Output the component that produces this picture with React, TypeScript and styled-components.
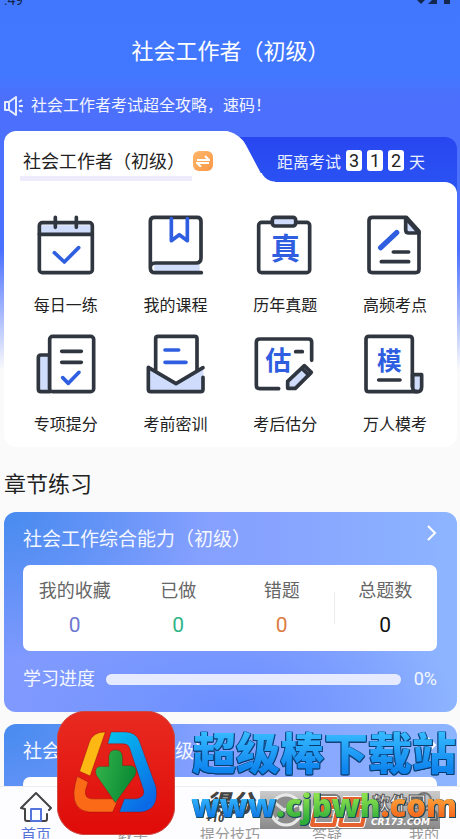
import React from "react";
import styled, { createGlobalStyle } from "styled-components";

const INK = "#30363f";
const BLUE = "#2f5fe0";
const PALE = "#cfdcfc";

const GlobalStyle = createGlobalStyle`
  *, *::before, *::after { box-sizing: border-box; }
  body {
    margin: 0;
    font-family: Roboto, "Noto Sans CJK SC", sans-serif;
    color: #222;
    background: #fafafb;
  }
  button { border: 0; padding: 0; background: none; font: inherit; color: inherit; cursor: pointer; }
  a { color: inherit; text-decoration: none; }
  h1, h2, h3, p, dl, dd, ul { margin: 0; padding: 0; font-weight: 400; }
  svg { display: block; flex: none; }
`;

const Screen = styled.div`
  position: relative;
  display: flex;
  flex-direction: column;
  height: 100vh;
  overflow: hidden;
`;

const Content = styled.main`
  flex: 1;
  min-height: 0;
  overflow: hidden;
  padding: 0 3px 0 4px;
  background: linear-gradient(#4177ff 0, #4278ff 75px, #4c70fc 95px, #4a70ff 250px, #fafafb 370px);
`;

const StatusBar = styled.div`
  display: flex;
  justify-content: space-between;
  align-items: flex-end;
  height: 5px;
  padding-right: 6px;
  font-size: 14px;
  line-height: 10px;
  color: #14284f;
  overflow: hidden;
`;

const PageTitle = styled.h1`
  padding: 31px 0 26px;
  font-size: 22px;
  line-height: 32px;
  text-align: center;
  color: #fff;
`;

const Notice = styled.p`
  display: flex;
  align-items: center;
  gap: 7px;
  margin-bottom: 13px;
  font-size: 16px;
  line-height: 24px;
  color: #f1f4ff;
  white-space: nowrap;
`;

const TabRow = styled.div`
  display: flex;
  align-items: flex-end;
`;

const SubjectTab = styled.div`
  position: relative;
  z-index: 1;
  display: flex;
  align-items: center;
  gap: 1px;
  width: 52%;
  height: 51px;
  padding: 0 0 0 16px;
  background: #fff;
  border-radius: 12px 16px 0 0;

  &::after {
    content: "";
    position: absolute;
    inset: 0 -12px 0 auto;
    z-index: -1;
    width: 40px;
    background: #fff;
    border-top-right-radius: 14px;
    transform: skewX(28deg);
  }

  &::before {
    content: "";
    position: absolute;
    right: -35px;
    bottom: 0;
    width: 14px;
    height: 9px;
    background: radial-gradient(circle at 100% -6px, #fff0 14px, #fff 15px);
  }
`;

const SubjectName = styled.h2`
  height: 42px;
  margin-top: 6px;
  padding: 0 7px 0 3px;
  border-bottom: 5px solid #eeebfc;
  font-size: 18px;
  line-height: 45px;
  white-space: nowrap;
`;

const SwapButton = styled.button`
  display: grid;
  place-items: center;
  width: 20px;
  height: 20px;
  margin-top: 8px;
  border-radius: 6px;
  background: linear-gradient(135deg, #ffb76a, #fb9647);
`;

const Countdown = styled.div`
  flex: 1;
  display: flex;
  align-items: center;
  justify-content: flex-end;
  gap: 5px;
  height: 59px;
  margin: 0 0 -14px -8px;
  padding: 0 32px 12px 0;
  border-radius: 0 12px 0 0;
  background: linear-gradient(#2846f0, #2b55f4);
  font-size: 16px;
  color: #eaf0ff;
  white-space: nowrap;
`;

const Digit = styled.span`
  width: 16px;
  height: 21px;
  border-radius: 3px;
  background: #fff;
  color: #222;
  font-size: 18px;
  line-height: 21px;
  text-align: center;
`;

const FeaturePanel = styled.nav`
  position: relative;
  z-index: 1;
  display: grid;
  grid-template-columns: repeat(4, 1fr);
  gap: 13px 0;
  padding: 30px 7px 10px;
  border-radius: 0 12px 12px 12px;
  background: #fff;
`;

const Feature = styled.a`
  display: flex;
  flex-direction: column;
  align-items: center;
  gap: 16px;
  font-size: 16px;
  line-height: 24px;
`;

const SectionTitle = styled.h2`
  margin: 22px 0 11px;
  font-size: 22px;
  line-height: 32px;
`;

const CourseCard = styled.section`
  margin-bottom: 12px;
  padding: 12px 20px 21px 19px;
  border-radius: 12px;
  background:
    radial-gradient(ellipse 45% 75% at 0 0, #478bef, #5d92f500),
    radial-gradient(ellipse 50% 60% at 50% 100%, #6a8eff, #6a8eff00),
    linear-gradient(90deg, #8099ff, #87a3ff 60%, #8db5ff);
  color: #f4f7ff;
`;

const CourseHead = styled.div`
  display: flex;
  justify-content: space-between;
  align-items: flex-start;
  margin-bottom: 9px;
`;

const CourseName = styled.h3`
  font-size: 19px;
  line-height: 32px;
`;

const Stats = styled.dl`
  display: grid;
  grid-template-columns: repeat(4, 1fr);
  height: 86px;
  padding: 10px 0;
  border-radius: 7px;
  background: #fff;
  text-align: center;
`;

const Stat = styled.div`
  position: relative;
  font-size: 18px;
  line-height: 32px;
  color: #666;

  &:last-child::before {
    content: "";
    position: absolute;
    left: 0;
    top: 17px;
    width: 1px;
    height: 32px;
    background: #ececf0;
  }
`;

const StatValue = styled.dd<{ $tone: string }>`
  padding-top: 2px;
  font-size: 21px;
  color: ${(p) => p.$tone};
`;

const ProgressRow = styled.div`
  display: flex;
  align-items: center;
  margin-top: 16px;
  font-size: 18px;
  line-height: 24px;
`;

const ProgressTrack = styled.div`
  flex: 1;
  height: 11px;
  margin: 0 13px 0 11px;
  border-radius: 6px;
  background: #e6eaff;
`;

const TabBar = styled.nav`
  display: flex;
  justify-content: space-between;
  flex: none;
  height: 53px;
  padding: 4px 5px 0;
  overflow: hidden;
  border-top: 1px solid #ededf2;
  background: #fdfdff;
`;

const TabLink = styled.a<{ $active?: boolean }>`
  display: flex;
  flex-direction: column;
  align-items: center;
  gap: 2px;
  width: 62px;
  flex: none;
  font-size: 15px;
  line-height: 20px;
  white-space: nowrap;
  color: ${(p) => (p.$active ? "#5575dc" : "#999")};
`;

const ScoreMark = styled.span`
  height: 32px;
  font-size: 24px;
  line-height: 26px;
  font-weight: 900;
  font-style: italic;
  color: #444;
`;

const ScorePlus = styled.small`
  display: block;
  margin-top: -4px;
  font-size: 11px;
  line-height: 12px;
`;

const StoreBadge = styled.div`
  position: absolute;
  z-index: 2;
  right: 20px;
  bottom: 10px;
  width: 180px;
  height: 38px;
  background: linear-gradient(#9a9a9a80, #686868c8);
`;

const AppIcon = styled.div`
  position: absolute;
  z-index: 3;
  left: 57px;
  bottom: 4px;
`;

const Watermark = styled.div`
  position: absolute;
  z-index: 3;
  right: 3px;
  bottom: 12px;
  display: flex;
  flex-direction: column;
  align-items: center;
  white-space: nowrap;
`;

const SiteName = styled.strong`
  font: 900 44px/60px "Noto Sans CJK SC", sans-serif;
  color: transparent;
  background: linear-gradient(#35b9ff 20%, #0f86ee 80%);
  background-clip: text;
  filter: drop-shadow(1px 0 0 #0b4a86) drop-shadow(-1px 0 0 #0b4a86) drop-shadow(0 1px 0 #0b3a6c);
`;

const SiteUrl = styled.strong`
  margin-top: 2px;
  font: 800 31px/44px "Open Sans", sans-serif;
  filter: drop-shadow(1px 0 0 #1b4a5c) drop-shadow(0 1px 0 #1b4a5c);
`;

const UrlPart = styled.span<{ $from: string; $to: string }>`
  color: transparent;
  background: linear-gradient(${(p) => p.$from} 30%, ${(p) => p.$to} 85%);
  background-clip: text;
`;

const stroke = { fill: "none", stroke: INK, strokeWidth: 11, strokeLinecap: "round", strokeLinejoin: "round" } as const;

function Glyph({ box, children }: { box: string; children: React.ReactNode }) {
  return (
    <svg width="66" height="66" viewBox={box} aria-hidden="true" {...stroke}>
      {children}
    </svg>
  );
}

const glyphText = {
  fill: BLUE,
  stroke: "none",
  fontFamily: "'Noto Sans CJK SC', sans-serif",
  fontWeight: 700,
  textAnchor: "middle",
} as const;

const features = [
  {
    label: "每日一练",
    icon: (
      <Glyph box="98 35 198 198">
        <path d="M118 75h157v25H118z" fill={PALE} stroke="none" />
        <rect x="117" y="67" width="159" height="150" rx="9" />
        <path d="M117 102h159M165 51v30M228 51v30" />
        <path d="M162 157l30 28 43-43" stroke={BLUE} />
      </Glyph>
    ),
  },
  {
    label: "我的课程",
    icon: (
      <Glyph box="428 35 198 198">
        <path d="M462 192h136v20H462z" fill={PALE} stroke="none" />
        <path d="M450 202V63q0-12 12-12h128q12 0 12 12v110q0 15-15 15H465q-15 0-15 14 0 15 15 15h138" />
        <path d="M513 55v66l24-18 24 18V55" stroke={BLUE} />
      </Glyph>
    ),
  },
  {
    label: "历年真题",
    icon: (
      <Glyph box="67 35 198 198">
        <rect x="87" y="66" width="153" height="151" rx="9" />
        <rect x="128" y="51" width="70" height="26" rx="8" fill={PALE} />
        <text x="167" y="176" fontSize="88" {...glyphText}>真</text>
      </Glyph>
    ),
  },
  {
    label: "高频考点",
    icon: (
      <Glyph box="396 35 198 198">
        <path d="M417 61q0-10 10-10h102l38 42v114q0 10-10 10H427q-10 0-10-10z" />
        <path d="M527 53v35q0 10 10 10h30z" fill={PALE} />
        <path d="M452 142l48-45" stroke={BLUE} strokeWidth="16" />
        <path d="M490 155h46M454 184h82" />
      </Glyph>
    ),
  },
  {
    label: "专项提分",
    icon: (
      <Glyph box="98 31 198 198">
        <path d="M148 103h-26q-8 0-8 8v94q0 8 8 8h26z" fill={PALE} />
        <rect x="148" y="47" width="132" height="166" rx="9" fill="#fff" />
        <path d="M184 92h59M184 125h59" />
        <path d="M187 171l17 17 32-33" stroke={BLUE} />
      </Glyph>
    ),
  },
  {
    label: "考前密训",
    icon: (
      <Glyph box="428 31 198 198">
        <path d="M444 143l83 46 82-43v67H444z" fill={PALE} stroke="none" />
        <path d="M466 148V54q0-7 7-7h110q7 0 7 7v94" />
        <path d="M608 141l-81 48-83-49v66q0 7 7 7h150q7 0 7-7v-36" />
        <path d="M494 88h41M494 125h63" stroke={BLUE} />
      </Glyph>
    ),
  },
  {
    label: "考后估分",
    icon: (
      <Glyph box="67 31 198 198">
        <path d="M147 204H90q-10 0-10-10V65q0-10 10-10h147q9 0 9 10v54M198 93h20" />
        <path d="M174 182l50-47 21 20-48 48h-23z" fill={PALE} />
        <path d="M217 143l20 20" />
        <text x="146" y="149" fontSize="78" {...glyphText}>估</text>
      </Glyph>
    ),
  },
  {
    label: "万人模考",
    icon: (
      <Glyph box="396 31 198 198">
        <path d="M548 162h27v36q0 15-14 15-13 0-13-15z" fill={PALE} />
        <path d="M561 213H417q-9 0-9-9V56q0-9 9-9h121q9 0 9 9v142M446 178h64" />
        <text x="478" y="147" fontSize="74" {...glyphText}>模</text>
      </Glyph>
    ),
  },
];

const stats = [
  { label: "我的收藏", tone: "#6f78d2" },
  { label: "已做", tone: "#2fb587" },
  { label: "错题", tone: "#dc7c42" },
  { label: "总题数", tone: "#111" },
];

function Course({ name }: { name: string }) {
  return (
    <CourseCard>
      <CourseHead>
        <CourseName>{name}</CourseName>
        <button type="button" aria-label={`进入${name}`}>
          <svg width="10" height="18" viewBox="0 0 10 18" fill="none" stroke="#fff" strokeWidth="2">
            <path d="M1 2l7 7-7 7" />
          </svg>
        </button>
      </CourseHead>
      <Stats>
        {stats.map((s) => (
          <Stat key={s.label}>
            <dt>{s.label}</dt>
            <StatValue $tone={s.tone}>0</StatValue>
          </Stat>
        ))}
      </Stats>
      <ProgressRow>
        <span>学习进度</span>
        <ProgressTrack role="progressbar" aria-label="学习进度" aria-valuenow={0} aria-valuemin={0} aria-valuemax={100} />
        <span>0%</span>
      </ProgressRow>
    </CourseCard>
  );
}

function StoreLogo() {
  return (
    <svg width="118" height="124" viewBox="172 61 356 374" role="img" aria-label="超级棒下载站">
      <defs>
        <linearGradient id="red" x2="0" y2="1">
          <stop stopColor="#e82b20" />
          <stop offset="1" stopColor="#df0b08" />
        </linearGradient>
        <linearGradient id="sky" x2="0.6" y2="1">
          <stop stopColor="#05c3ee" />
          <stop offset="1" stopColor="#0b6be6" />
        </linearGradient>
        <linearGradient id="leaf" x2="1" y2="0.3">
          <stop stopColor="#36b64c" />
          <stop offset="1" stopColor="#0b8a35" />
        </linearGradient>
      </defs>
      <rect x="173" y="62" width="354" height="372" rx="84" fill="url(#red)" stroke="#c9483f" strokeWidth="3" />
      <g stroke="#9d1010" strokeOpacity="0.5" strokeWidth="3">
        <path d="M318 124q-38 0-48 30l-30 89 32 14z" fill="#fdb813" />
        <path d="M233 258l33 17-8 25q-4 26 22 26h77l-17 40h-70q-50-5-47-61 2-22 10-47z" fill="#fb6a17" />
        <path d="M325 160l10-36h45q30 2 40 26l51 140q10 70-46 76h-65l15-40h35q28-6 23-26l-43-130q-5-10-18-10z" fill="url(#sky)" />
        <path d="M328 228v-30q2-20 20-20 20 0 22 20v27h25q22 5 14 29l-61 84-58-84q-7-26 15-26z" fill="url(#leaf)" />
      </g>
    </svg>
  );
}

export default function App() {
  return (
    <Screen>
      <GlobalStyle />
      <Content>
        <StatusBar>
          <span>:49</span>
          <svg width="34" height="5" viewBox="0 0 34 5" fill="#14284f">
            <path d="M0 0h8L4 4zM11 4l4-4h5v4zM27 0h6v4h-6z" />
          </svg>
        </StatusBar>
        <PageTitle>社会工作者（初级）</PageTitle>
        <Notice>
          <svg width="20" height="20" viewBox="0 0 20 20" fill="none" stroke="#e4ebff" strokeWidth="2" strokeLinejoin="round">
            <path d="M1 6h4l7-5v18l-7-5H1zM5 6v8M15 6l3-2M15 10h4M15 14l3 2" />
          </svg>
          社会工作者考试超全攻略，速码！
        </Notice>
        <TabRow>
          <SubjectTab>
            <SubjectName>社会工作者（初级）</SubjectName>
            <SwapButton type="button" aria-label="切换科目">
              <svg width="14" height="12" viewBox="0 0 14 12" fill="none" stroke="#fff" strokeWidth="2">
                <path d="M1 5h12L9 1M13 8H1l4 4" />
              </svg>
            </SwapButton>
          </SubjectTab>
          <Countdown>
            <span>距离考试</span>
            <Digit>3</Digit>
            <Digit>1</Digit>
            <Digit>2</Digit>
            <span>天</span>
          </Countdown>
        </TabRow>
        <FeaturePanel>
          {features.map((f) => (
            <Feature href="#" key={f.label}>
              {f.icon}
              <span>{f.label}</span>
            </Feature>
          ))}
        </FeaturePanel>
        <SectionTitle>章节练习</SectionTitle>
        <Course name="社会工作综合能力（初级）" />
        <Course name="社会工作实务（初级）" />
      </Content>
      <TabBar>
        <TabLink href="#" $active>
          <svg width="32" height="32" viewBox="0 0 32 32" fill="none" stroke="#444" strokeWidth="2" strokeLinecap="round" strokeLinejoin="round">
            <path d="M29 19l2-2L16 2 1 17l4 1v10q0 2 2 2h18q2 0 2-2v-5" />
            <path d="M11 30V18h10v12z" stroke="#5575dc" />
          </svg>
          首页
        </TabLink>
        <TabLink href="#">
          <svg width="32" height="32" viewBox="0 0 32 32" fill="none" stroke="#444" strokeWidth="2">
            <rect x="3" y="5" width="26" height="20" rx="3" />
            <path d="M13 11v8l7-4z" />
          </svg>
          教学
        </TabLink>
        <TabLink href="#">
          <ScoreMark>
            得分<ScorePlus>+10</ScorePlus>
          </ScoreMark>
          提分技巧
        </TabLink>
        <TabLink href="#">
          <svg width="32" height="32" viewBox="0 0 32 32" fill="none" stroke="#666" strokeWidth="2">
            <rect x="3" y="4" width="26" height="22" rx="5" />
          </svg>
          答疑
        </TabLink>
        <TabLink href="#">
          <svg width="32" height="32" viewBox="0 0 32 32" fill="none" stroke="#555" strokeWidth="2">
            <circle cx="16" cy="9" r="7" />
            <path d="M3 29v-4q0-6 6-6h14q6 0 6 6v4z" />
          </svg>
          我的
        </TabLink>
      </TabBar>
      <StoreBadge>
        <svg width="180" height="38" viewBox="0 0 180 38" fill="none">
          <circle cx="26" cy="19" r="15" stroke="#e9e9e9" strokeWidth="3" fill="#8c8c8c" />
          <path d="M14 11l10 8-8 10M24 19l14-5" stroke="#ddd" strokeWidth="3" />
          <g stroke="#fff" strokeWidth="6" strokeLinejoin="round">
            <path d="M55 8h22M52 34h22l4-18H56zM83 8h22M80 34h22l4-18H84z" />
          </g>
          <g stroke="#e5622f" strokeWidth="4" strokeLinejoin="round">
            <path d="M55 8h22M52 34h22l4-18H56zM83 8h22M80 34h22l4-18H84zM64 8l-2 18M71 8l-2 18M92 8l-2 18M99 8l-2 18" />
          </g>
          <text x="112" y="19" fontSize="18" fontWeight="700" fill="#fff" stroke="#555" strokeWidth="1" fontFamily="'Noto Sans CJK SC', sans-serif">软件园</text>
          <text x="111" y="34" fontSize="9" fontWeight="700" fontStyle="italic" fill="#fff" fontFamily="'DejaVu Sans', sans-serif">CR173.COM</text>
        </svg>
      </StoreBadge>
      <AppIcon>
        <StoreLogo />
      </AppIcon>
      <Watermark>
        <SiteName>超级棒下载站</SiteName>
        <SiteUrl>
          <UrlPart $from="#35b9ff" $to="#0a6fe0">www</UrlPart>
          <UrlPart $from="#8be04e" $to="#2fae3a">.cjbwh</UrlPart>
          <UrlPart $from="#ffa53a" $to="#f3601a">.com</UrlPart>
        </SiteUrl>
      </Watermark>
    </Screen>
  );
}
